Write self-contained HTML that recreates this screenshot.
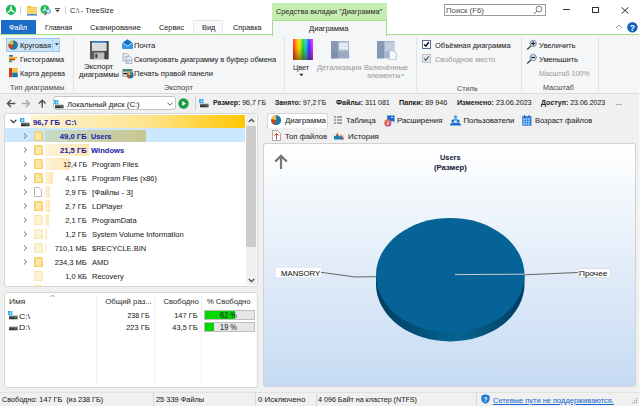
<!DOCTYPE html>
<html><head><meta charset="utf-8"><style>
html,body{margin:0;padding:0;width:640px;height:406px;overflow:hidden;background:#f0f0f0}
body{position:relative;font-family:"Liberation Sans",sans-serif;}
.t{position:absolute;white-space:pre;line-height:11px;-webkit-text-stroke:0.05px currentColor}

</style></head><body>
<div style="position:absolute;left:0px;top:0px;width:640px;height:20px;background:#fff"></div>
<div style="position:absolute;left:0px;top:20px;width:640px;height:14.5px;background:#fff"></div>
<div style="position:absolute;left:0px;top:35px;width:640px;height:58px;background:#f5f6f7"></div>
<div style="position:absolute;left:0px;top:93px;width:640px;height:1px;background:#dadbdc"></div>
<svg style="position:absolute;left:5px;top:4px;" width="12" height="12" viewBox="0 0 12 12"><circle cx="6" cy="5.8" r="5.1" fill="#1db954"/><path d="M6 2.4v3.4M6 5.8L3.1 8M6 5.8L8.9 8" stroke="#fff" stroke-width="1.5" fill="none" stroke-linecap="round"/></svg>
<div style="position:absolute;left:20px;top:6px;width:1px;height:7.5px;background:#cfcfcf"></div>
<svg style="position:absolute;left:26px;top:5px;" width="12" height="11" viewBox="0 0 12 11"><path d="M1 1h3.6l1 1.1H11V9H1z" fill="#f3b821"/><rect x="1" y="2.6" width="10" height="6.4" fill="#fbd66a"/><rect x="1" y="9" width="10" height="1.6" fill="#3d8fd6"/></svg>
<svg style="position:absolute;left:39px;top:4px;" width="14" height="13" viewBox="0 0 14 13"><circle cx="5.8" cy="5.4" r="4.4" fill="#1db954"/><path d="M5.8 2.6v2.8M5.8 5.4L3.6 7M5.8 5.4l2.2 1.6" stroke="#fff" stroke-width="1.1" fill="none"/><circle cx="9.4" cy="7.2" r="2.3" fill="#b9dcf6" stroke="#5b9ad6" stroke-width=".8"/><path d="M7.7 8.8L5.4 11.2" stroke="#555" stroke-width="1.1"/></svg>
<svg style="position:absolute;left:54px;top:7px;" width="7" height="6" viewBox="0 0 7 6"><path d="M1 1.7h5" stroke="#333" stroke-width="1"/><path d="M1.5 3h4L3.5 5z" fill="#222"/></svg>
<div style="position:absolute;left:65px;top:6px;width:1px;height:7.5px;background:#cfcfcf"></div>
<div class="t" style="left:70.17px;top:4.9px;transform-origin:0 0;transform:scaleX(0.9158);font-size:7.8px;color:#1e1e1e">C:\ - TreeSize</div>
<div style="position:absolute;left:272px;top:2.5px;width:115px;height:17.5px;background:#c6edb1"></div>
<div class="t" style="left:276.26px;top:6.4px;transform-origin:0 0;transform:scaleX(0.9329);font-size:7.8px;color:#2e2e2e">Средства вкладки "Диаграмма"</div>
<div style="position:absolute;left:443.5px;top:4px;width:102.3px;height:12.3px;background:#fff;border:1px solid #9c9c9c;box-sizing:border-box"></div>
<div class="t" style="left:446.44px;top:5.4px;transform-origin:0 0;transform:scaleX(0.9935);font-size:7.8px;color:#555">Поиск (F6)</div>
<svg style="position:absolute;left:533px;top:5px;" width="10" height="10" viewBox="0 0 10 10"><circle cx="6" cy="4" r="2.9" fill="none" stroke="#707070" stroke-width=".9"/><path d="M4 6L1 9" stroke="#707070" stroke-width="1"/></svg>
<div style="position:absolute;left:563px;top:9.3px;width:7px;height:1px;background:#333"></div>
<div style="position:absolute;left:592px;top:6.8px;width:6.5px;height:6.2px;border:1px solid #333;box-sizing:border-box"></div>
<svg style="position:absolute;left:620.5px;top:6.5px;" width="8" height="7" viewBox="0 0 8 7"><path d="M.5 .3l7 6.4M7.5 .3l-7 6.4" stroke="#222" stroke-width="1"/></svg>
<div style="position:absolute;left:1px;top:20px;width:35px;height:14.3px;background:#1a6cc6"></div>
<div class="t" style="left:9.31px;top:22.2px;transform-origin:0 0;transform:scaleX(0.9405);font-size:7.8px;color:#fff">Файл</div>
<div class="t" style="left:45.17px;top:22.2px;transform-origin:0 0;transform:scaleX(0.9182);font-size:7.8px;color:#1e1e1e">Главная</div>
<div class="t" style="left:90.35px;top:22.2px;transform-origin:0 0;transform:scaleX(0.9680);font-size:7.8px;color:#1e1e1e">Сканирование</div>
<div class="t" style="left:159.36px;top:22.2px;transform-origin:0 0;transform:scaleX(0.9392);font-size:7.8px;color:#1e1e1e">Сервис</div>
<div style="position:absolute;left:193.4px;top:20px;width:29.2px;height:14.5px;background:#fafafb;border:1px solid #e4e5e6;border-bottom:none;box-sizing:border-box"></div>
<div class="t" style="left:201.56px;top:22.2px;transform-origin:0 0;transform:scaleX(0.9489);font-size:7.8px;color:#1e1e1e">Вид</div>
<div class="t" style="left:232.76px;top:22.2px;transform-origin:0 0;transform:scaleX(0.9340);font-size:7.8px;color:#1e1e1e">Справка</div>
<div style="position:absolute;left:0px;top:34.2px;width:273px;height:1.3px;background:#a3df86"></div>
<div style="position:absolute;left:386px;top:34.2px;width:253px;height:1.3px;background:#a3df86"></div>
<div style="position:absolute;left:639px;top:20px;width:1px;height:386px;background:#f8f8f8"></div>
<div style="position:absolute;left:272px;top:20px;width:115px;height:15.5px;background:#f5f6f7;border:1.3px solid #a3df86;border-bottom:none;box-sizing:border-box"></div>
<div class="t" style="left:309.14px;top:22.5px;transform-origin:0 0;transform:scaleX(0.9745);font-size:7.8px;color:#1e1e1e">Диаграмма</div>
<svg style="position:absolute;left:614.5px;top:24px;" width="8" height="5" viewBox="0 0 8 5"><path d="M1 4l3-3 3 3" stroke="#9a9a9a" stroke-width="1" fill="none"/></svg>
<svg style="position:absolute;left:627px;top:21.5px;" width="11" height="11" viewBox="0 0 11 11"><circle cx="5.4" cy="5.3" r="5.2" fill="#1462c0"/><text x="5.4" y="8.6" text-anchor="middle" font-family="Liberation Sans" font-weight="bold" font-size="8.5" fill="#fff">?</text></svg>
<div style="position:absolute;left:73.4px;top:37px;width:1px;height:54px;background:#e2e3e4"></div>
<div style="position:absolute;left:284.4px;top:37px;width:1px;height:54px;background:#e2e3e4"></div>
<div style="position:absolute;left:416px;top:37px;width:1px;height:54px;background:#e2e3e4"></div>
<div style="position:absolute;left:520.5px;top:37px;width:1px;height:54px;background:#e2e3e4"></div>
<div style="position:absolute;left:597.6px;top:37px;width:1px;height:54px;background:#e2e3e4"></div>
<div style="position:absolute;left:6.3px;top:37.6px;width:53.5px;height:14px;background:#cce4f7;border:1px solid #98c8ee;box-sizing:border-box"></div>
<div style="position:absolute;left:52.3px;top:38.6px;width:1px;height:12px;background:#98c8ee"></div>
<svg style="position:absolute;left:8px;top:39.5px;" width="11" height="11" viewBox="0 0 11 11"><circle cx="5.2" cy="5.1" r="4.7" fill="#1e78a8"/><path d="M5.2 5.1L5.2 .4A4.7 4.7 0 0 0 .6 4.1z" fill="#f2c23e"/><path d="M5.2 5.1L.6 4.1A4.7 4.7 0 0 0 3.5 9.5z" fill="#cc4416"/></svg>
<div class="t" style="left:20.35px;top:40.1px;transform-origin:0 0;transform:scaleX(0.9625);font-size:7.8px;color:#1e1e1e">Круговая</div>
<svg style="position:absolute;left:54px;top:42px;" width="6" height="5" viewBox="0 0 6 5"><path d="M.8 1.2h4L2.8 3.6z" fill="#333"/></svg>
<svg style="position:absolute;left:9px;top:55px;" width="9" height="8" viewBox="0 0 9 8"><rect x="0" y="0" width="4" height="1.8" fill="#2a7ab8"/><rect x="0" y="1.8" width="8.5" height="1.8" fill="#f2b630"/><rect x="0" y="3.6" width="6" height="1.8" fill="#c84016"/><rect x="0" y="5.4" width="3" height="1.8" fill="#3a9a5a"/></svg>
<div class="t" style="left:20.36px;top:54.0px;transform-origin:0 0;transform:scaleX(0.9494);font-size:7.8px;color:#1e1e1e">Гистограмма</div>
<svg style="position:absolute;left:9px;top:68px;" width="9" height="9.5" viewBox="0 0 9 9.5"><rect x="0" y="0" width="3.2" height="9.2" fill="#c84016"/><rect x="3.2" y="0" width="5.6" height="4.6" fill="#f2c23e"/><rect x="3.2" y="4.6" width="5.6" height="4.6" fill="#1e78a8"/></svg>
<div class="t" style="left:20.37px;top:67.6px;transform-origin:0 0;transform:scaleX(0.9157);font-size:7.8px;color:#1e1e1e">Карта дерева</div>
<div class="t" style="left:10.15px;top:82.0px;transform-origin:0 0;transform:scaleX(0.9654);font-size:7.8px;color:#505050">Тип диаграммы</div>
<svg style="position:absolute;left:90.3px;top:40.6px;" width="19" height="19" viewBox="0 0 19 19"><rect x="0" y="0" width="18.5" height="18.2" fill="#5a5a5a"/><rect x="14.8" y="0" width="3.7" height="18.2" fill="#464646"/><rect x="2" y="0" width="14.5" height="1.8" fill="#2f7fd2"/><rect x="2" y="1.8" width="14.5" height="8" fill="#e8e8e8"/><path d="M2 3.6h14.5M2 5.4h14.5M2 7.2h14.5M2 9h14.5" stroke="#c9c9c9" stroke-width=".7"/><rect x="4.2" y="11.6" width="10" height="6.6" fill="#bdbdbd"/><rect x="5.4" y="12.8" width="1.8" height="4.2" fill="#3a3a3a"/></svg>
<div class="t" style="left:84.33px;top:61.2px;transform-origin:0 0;transform:scaleX(0.9943);font-size:7.8px;color:#1e1e1e">Экспорт</div>
<div class="t" style="left:79.25px;top:69.4px;transform-origin:0 0;transform:scaleX(0.9712);font-size:7.8px;color:#1e1e1e">диаграммы</div>
<svg style="position:absolute;left:122px;top:39.3px;" width="11" height="10" viewBox="0 0 11 10"><path d="M.4 3.8L5.5 .2l5.1 3.6V9.8H.4z" fill="#1670c8"/><path d="M.4 4.4L5.5 7.6l5.1-3.2V9.8H.4z" fill="#2a9ae8"/><path d="M.6 3.9L5.5 7.1l4.9-3.2" stroke="#fff" stroke-width=".8" fill="none"/></svg>
<div class="t" style="left:134.34px;top:39.8px;transform-origin:0 0;transform:scaleX(0.9845);font-size:7.8px;color:#1e1e1e">Почта</div>
<svg style="position:absolute;left:122px;top:53px;" width="11" height="11" viewBox="0 0 11 11"><path d="M1.2 .3h3.6l2 2v5.6H1.2z" fill="#f4f8fc" stroke="#8c8c8c" stroke-width=".7"/><rect x="2" y="2.5" width="2.5" height="3" fill="#cfe0f4"/><path d="M4.2 3.3h3.6l2 2v5.4H4.2z" fill="#eef4fb" stroke="#8c8c8c" stroke-width=".7"/><rect x="5.1" y="6" width="3.2" height="3.2" fill="#a9c9ee"/></svg>
<div class="t" style="left:134.25px;top:54.0px;transform-origin:0 0;transform:scaleX(0.9535);font-size:7.8px;color:#1e1e1e">Скопировать диаграмму в буфер обмена</div>
<svg style="position:absolute;left:122px;top:68.6px;" width="12" height="10" viewBox="0 0 12 10"><rect x=".6" y=".2" width="9.6" height="2.2" fill="#2f4f44"/><rect x="1.2" y=".6" width="8.4" height="1" fill="#3cb878"/><rect x=".3" y="2.3" width="10.2" height="5" rx=".6" fill="#dcdcdc" stroke="#5a5a5a" stroke-width=".5"/><rect x="1.4" y="3.9" width="5.5" height="1.3" fill="#111"/><circle cx="8.3" cy="6.3" r="3.3" fill="#1e78a8"/><path d="M8.3 6.3V3A3.3 3.3 0 0 0 5.2 5.2z" fill="#f2c23e"/><path d="M8.3 6.3L5.2 5.2A3.3 3.3 0 0 0 7.2 9.4z" fill="#cc4416"/></svg>
<div class="t" style="left:134.35px;top:68.0px;transform-origin:0 0;transform:scaleX(0.9697);font-size:7.8px;color:#1e1e1e">Печать правой панели</div>
<div class="t" style="left:164.04px;top:82.0px;transform-origin:0 0;transform:scaleX(0.9873);font-size:7.8px;color:#505050">Экспорт</div>
<div style="position:absolute;left:292.6px;top:39.2px;width:20.4px;height:20.6px;background:linear-gradient(90deg,#ff2020,#ffa000 18%,#e8e800 33%,#20d020 50%,#20d0d0 64%,#3030ff 80%,#ff20ff);"><div style="position:absolute;inset:0;background:linear-gradient(180deg,rgba(255,255,255,.15),rgba(128,128,128,0) 40%,rgba(80,40,40,.55))"></div></div>
<div class="t" style="left:293.27px;top:61.6px;transform-origin:0 0;transform:scaleX(0.9246);font-size:7.8px;color:#1e1e1e">Цвет</div>
<svg style="position:absolute;left:299px;top:72.5px;" width="5" height="4" viewBox="0 0 5 4"><path d="M.3 .8h4L2.3 3.2z" fill="#222"/></svg>
<svg style="position:absolute;left:330.7px;top:41px;" width="19" height="18" viewBox="0 0 19 18"><rect x="0" y="0" width="18.1" height="17.4" fill="#a3b3cc"/><rect x="0" y="0" width="7" height="17.4" fill="#8798b6"/><rect x="0" y="11" width="18.1" height="6.4" fill="#000" opacity=".06"/><rect x="7.8" y="1.2" width="9.4" height="8.2" fill="#c9d4e5"/><g fill="#f4f7fb"><rect x="8.8" y="2.4" width="2.1" height="2.6"/><rect x="11.6" y="2.4" width="2.1" height="2.6"/><rect x="14.4" y="2.4" width="2.1" height="2.6"/><rect x="8.8" y="5.6" width="2.1" height="2.6"/><rect x="11.6" y="5.6" width="2.1" height="2.6"/><rect x="14.4" y="5.6" width="2.1" height="2.6"/></g></svg>
<div class="t" style="left:317.16px;top:61.6px;transform-origin:0 0;transform:scaleX(0.9455);font-size:7.8px;color:#9c9c9c">Детализация</div>
<svg style="position:absolute;left:377px;top:41px;" width="20" height="19" viewBox="0 0 20 19"><rect x="0" y="0" width="17.5" height="17.4" fill="#a7b7cf"/><rect x="0" y="0" width="7" height="17.4" fill="#8798b6"/><rect x="7.8" y="1.2" width="9" height="9" fill="#c2cee2"/><path d="M12.3 9.6h4.2l2.8 2.8v6.3h-7z" fill="#f4f7fc" stroke="#9fb0ca" stroke-width=".7"/></svg>
<div class="t" style="left:364.35px;top:61.6px;transform-origin:0 0;transform:scaleX(0.9587);font-size:7.8px;color:#9c9c9c">Включённые</div>
<div class="t" style="left:366.56px;top:70.3px;transform-origin:0 0;transform:scaleX(0.9302);font-size:7.8px;color:#9c9c9c">элементы</div>
<svg style="position:absolute;left:401px;top:73.8px;" width="4" height="3" viewBox="0 0 4 3"><path d="M.2 .5h3.2L1.8 2.5z" fill="#aaa"/></svg>
<div style="position:absolute;left:422.2px;top:40.2px;width:8.5px;height:8.6px;background:#fff;border:1px solid #5b6f94;box-sizing:border-box"></div>
<svg style="position:absolute;left:423px;top:41px;" width="7" height="7" viewBox="0 0 7 7"><path d="M1.2 3.4l1.6 1.8L5.8 1.3" stroke="#000" stroke-width="1.4" fill="none"/></svg>
<div class="t" style="left:435.26px;top:39.6px;transform-origin:0 0;transform:scaleX(0.9473);font-size:7.8px;color:#1e1e1e">Объёмная диаграмма</div>
<div style="position:absolute;left:422.2px;top:54.4px;width:8.5px;height:8.8px;background:#e4e4e4;border:1px solid #c4c4c4;box-sizing:border-box"></div>
<svg style="position:absolute;left:423px;top:55.3px;" width="7" height="7" viewBox="0 0 7 7"><path d="M1.2 3.4l1.6 1.8L5.8 1.3" stroke="#3f5f8f" stroke-width="1.2" fill="none"/></svg>
<div class="t" style="left:435.26px;top:53.6px;transform-origin:0 0;transform:scaleX(0.9486);font-size:7.8px;color:#9c9c9c">Свободное место</div>
<div class="t" style="left:457.37px;top:82.5px;transform-origin:0 0;transform:scaleX(0.9277);font-size:7.8px;color:#505050">Стиль</div>
<svg style="position:absolute;left:526px;top:37.5px;" width="12" height="13" viewBox="0 0 12 13"><circle cx="7.2" cy="5.5" r="3.2" fill="#c9d9ea" stroke="#51739a" stroke-width=".7"/><path d="M5.3 5.5h3.8M7.2 3.6v3.8" stroke="#111" stroke-width="1.1"/><path d="M4.9 7.8L1.2 11.5" stroke="#333" stroke-width="1.2"/></svg>
<div class="t" style="left:538.55px;top:39.8px;transform-origin:0 0;transform:scaleX(0.9707);font-size:7.8px;color:#1e1e1e">Увеличить</div>
<svg style="position:absolute;left:526px;top:51.6px;" width="12" height="13" viewBox="0 0 12 13"><circle cx="7.2" cy="5.5" r="3.2" fill="#c9d9ea" stroke="#51739a" stroke-width=".7"/><path d="M5.3 5.5h3.8" stroke="#111" stroke-width="1.1"/><path d="M4.9 7.8L1.2 11.5" stroke="#333" stroke-width="1.2"/></svg>
<div class="t" style="left:538.55px;top:53.8px;transform-origin:0 0;transform:scaleX(0.9528);font-size:7.8px;color:#1e1e1e">Уменьшить</div>
<div class="t" style="left:538.57px;top:67.9px;transform-origin:0 0;transform:scaleX(0.9132);font-size:7.8px;color:#9c9c9c">Масштаб 100%</div>
<div class="t" style="left:542.87px;top:82.2px;transform-origin:0 0;transform:scaleX(0.9222);font-size:7.8px;color:#505050">Масштаб</div>
<svg style="position:absolute;left:6px;top:98.5px;" width="10" height="9" viewBox="0 0 10 9"><path d="M9.3 4.5H1.4M5 1L1.4 4.5 5 8" stroke="#505050" stroke-width="1.4" fill="none"/></svg>
<svg style="position:absolute;left:21px;top:98.5px;" width="10" height="9" viewBox="0 0 10 9"><path d="M.7 4.5h7.9M5 1l3.6 3.5L5 8" stroke="#a8a8a8" stroke-width="1.3" fill="none"/></svg>
<svg style="position:absolute;left:38px;top:99px;" width="9" height="9" viewBox="0 0 9 9"><path d="M4.2 8.8V1.2M.9 4.5l3.3-3.3L7.5 4.5" stroke="#505050" stroke-width="1.4" fill="none"/></svg>
<div style="position:absolute;left:52.5px;top:95.5px;width:123px;height:14.8px;background:#fff;border:1px solid #c4c4c4;border-radius:3px;box-sizing:border-box"></div>
<svg style="position:absolute;left:53.8px;top:99.5px;" width="10" height="9" viewBox="0 0 10 9"><defs><linearGradient id="dg" x1="0" x2="0" y1="0" y2="1"><stop offset="0" stop-color="#d0d0d0"/><stop offset=".35" stop-color="#5a5a5a"/><stop offset="1" stop-color="#1e1e1e"/></linearGradient></defs><rect x="1" y="4.3" width="8.6" height="4" rx=".9" fill="url(#dg)"/><rect x="6.6" y="6.6" width="1.8" height=".9" fill="#30d050"/><g fill="#2aa8f0"><rect x="0" y="0" width="2" height="1.9"/><rect x="2.4" y="0" width="2" height="1.9"/><rect x="0" y="2.3" width="2" height="1.9"/><rect x="2.4" y="2.3" width="2" height="1.9"/></g></svg>
<div class="t" style="left:67.44px;top:99.1px;transform-origin:0 0;transform:scaleX(0.9841);font-size:7.8px;color:#1e1e1e">Локальный диск (C:)</div>
<svg style="position:absolute;left:166.5px;top:101.5px;" width="6" height="4" viewBox="0 0 6 4"><path d="M.5 .7l2.5 2.5L5.5 .7" stroke="#555" stroke-width=".9" fill="none"/></svg>
<svg style="position:absolute;left:177.5px;top:97.8px;" width="11" height="11" viewBox="0 0 11 11"><circle cx="5.5" cy="5.5" r="5.2" fill="#1a9e46"/><path d="M4.3 3.1v4.8L7.9 5.5z" fill="#fff"/></svg>
<div style="position:absolute;left:195.3px;top:95.8px;width:1px;height:14.5px;background:#cfcfcf"></div>
<svg style="position:absolute;left:198.8px;top:99.3px;" width="10" height="9" viewBox="0 0 10 9"><defs><linearGradient id="dg" x1="0" x2="0" y1="0" y2="1"><stop offset="0" stop-color="#d0d0d0"/><stop offset=".35" stop-color="#5a5a5a"/><stop offset="1" stop-color="#1e1e1e"/></linearGradient></defs><rect x="1" y="4.3" width="8.6" height="4" rx=".9" fill="url(#dg)"/><rect x="6.6" y="6.6" width="1.8" height=".9" fill="#30d050"/><g fill="#2aa8f0"><rect x="0" y="0" width="2" height="1.9"/><rect x="2.4" y="0" width="2" height="1.9"/><rect x="0" y="2.3" width="2" height="1.9"/><rect x="2.4" y="2.3" width="2" height="1.9"/></g></svg>
<div class="t" style="left:213.18px;top:97.2px;transform-origin:0 0;transform:scaleX(0.8802);font-size:7.9px;color:#1e1e1e"><b>Размер:</b> 96,7 ГБ</div>
<div class="t" style="left:275.19px;top:97.2px;transform-origin:0 0;transform:scaleX(0.8680);font-size:7.9px;color:#1e1e1e"><b>Занято:</b> 97,2 ГБ</div>
<div class="t" style="left:335.68px;top:97.2px;transform-origin:0 0;transform:scaleX(0.8883);font-size:7.9px;color:#1e1e1e"><b>Файлы:</b> 311 081</div>
<div class="t" style="left:398.86px;top:97.2px;transform-origin:0 0;transform:scaleX(0.9188);font-size:7.9px;color:#1e1e1e"><b>Папки:</b> 89 946</div>
<div class="t" style="left:457.17px;top:97.2px;transform-origin:0 0;transform:scaleX(0.9016);font-size:7.9px;color:#1e1e1e"><b>Изменено:</b> 23.06.2023</div>
<div class="t" style="left:541.18px;top:97.2px;transform-origin:0 0;transform:scaleX(0.8878);font-size:7.9px;color:#1e1e1e"><b>Доступ:</b> 23.06.2023</div>
<div class="t" style="left:615.53px;top:97.2px;transform-origin:0 0;font-size:7.8px;color:#1e1e1e">...</div>
<div style="position:absolute;left:4px;top:113px;width:253.5px;height:173.5px;background:#fff;border:1px solid #d6d6d6;border-radius:3px;box-sizing:border-box"></div>
<div style="position:absolute;left:246px;top:114.2px;width:10.3px;height:171.3px;background:#f0f0f0"></div>
<div style="position:absolute;left:246px;top:126px;width:10.3px;height:120.6px;background:#cdcdcd"></div>
<svg style="position:absolute;left:247.5px;top:117.5px;" width="7" height="5" viewBox="0 0 7 5"><path d="M.8 4l2.7-2.7L6.2 4" stroke="#444" stroke-width="1.2" fill="none"/></svg>
<svg style="position:absolute;left:247.5px;top:277.5px;" width="7" height="5" viewBox="0 0 7 5"><path d="M.8 1l2.7 2.7L6.2 1" stroke="#444" stroke-width="1.2" fill="none"/></svg>
<div style="position:absolute;left:30.8px;top:115.2px;width:214.2px;height:12.7px;background:linear-gradient(90deg,#fff4d4 0%,#ffe38e 55%,#ffc700 100%)"></div>
<svg style="position:absolute;left:9.5px;top:119.3px;" width="7" height="4.5" viewBox="0 0 7 4.5"><path d="M.6 .8l2.9 2.8L6.4 .8" stroke="#333" stroke-width="1.2" fill="none"/></svg>
<svg style="position:absolute;left:20px;top:117.5px;" width="10" height="9" viewBox="0 0 10 9"><defs><linearGradient id="dg" x1="0" x2="0" y1="0" y2="1"><stop offset="0" stop-color="#d0d0d0"/><stop offset=".35" stop-color="#5a5a5a"/><stop offset="1" stop-color="#1e1e1e"/></linearGradient></defs><rect x="1" y="4.3" width="8.6" height="4" rx=".9" fill="url(#dg)"/><rect x="6.6" y="6.6" width="1.8" height=".9" fill="#30d050"/><g fill="#2aa8f0"><rect x="0" y="0" width="2" height="1.9"/><rect x="2.4" y="0" width="2" height="1.9"/><rect x="0" y="2.3" width="2" height="1.9"/><rect x="2.4" y="2.3" width="2" height="1.9"/></g></svg>
<div class="t" style="left:33.29px;top:116.7px;transform-origin:0 0;transform:scaleX(0.9929);font-size:7.8px;color:#1c1ca8;font-weight:bold">96,7 ГБ</div>
<div class="t" style="left:65.09px;top:116.7px;transform-origin:0 0;transform:scaleX(1.0982);font-size:7.8px;color:#1c1ca8;font-weight:bold">C:\</div>
<div style="position:absolute;left:5px;top:128.4px;width:240px;height:13.9px;background:#cce8ff"></div>
<div style="position:absolute;left:45.3px;top:129.6px;width:100.39999999999999px;height:12.6px;background:linear-gradient(90deg,#c7dcc8,#c9c590)"></div>
<svg style="position:absolute;left:23px;top:132.9px;" width="5" height="6" viewBox="0 0 5 6"><path d="M1 .6l2.5 2.4L1 5.4" stroke="#666" stroke-width="1" fill="none"/></svg>
<svg style="position:absolute;left:33.6px;top:130.9px;" width="10" height="10" viewBox="0 0 10 10"><g opacity="1"><rect x=".7" y=".7" width="7.4" height="9.1" fill="#f9dc80" stroke="#efc344" stroke-width=".9"/><rect x="1.6" y="1.6" width="5.6" height="7.3" fill="#fce7a6"/><path d="M8.1 5.5l.8 1v2.5h-.8z" fill="#efc344"/></g></svg>
<div class="t" style="right:552.94px;top:131.2px;transform-origin:100% 0;transform:scaleX(0.9718);font-size:7.9px;color:#1c1ca8;font-weight:bold">49,0 ГБ</div>
<div class="t" style="left:91.16px;top:131.2px;transform-origin:0 0;transform:scaleX(0.9290);font-size:7.9px;color:#1c1ca8;font-weight:bold">Users</div>
<div style="position:absolute;left:45.3px;top:143.6px;width:43.900000000000006px;height:12.6px;background:linear-gradient(90deg,#fef4dc,#fde7b2)"></div>
<svg style="position:absolute;left:23px;top:146.9px;" width="5" height="6" viewBox="0 0 5 6"><path d="M1 .6l2.5 2.4L1 5.4" stroke="#666" stroke-width="1" fill="none"/></svg>
<svg style="position:absolute;left:33.6px;top:144.9px;" width="10" height="10" viewBox="0 0 10 10"><g opacity="1"><rect x=".7" y=".7" width="7.4" height="9.1" fill="#f9dc80" stroke="#efc344" stroke-width=".9"/><rect x="1.6" y="1.6" width="5.6" height="7.3" fill="#fce7a6"/><path d="M8.1 5.5l.8 1v2.5h-.8z" fill="#efc344"/></g></svg>
<div class="t" style="right:552.94px;top:145.2px;transform-origin:100% 0;transform:scaleX(0.9643);font-size:7.9px;color:#1c1ca8;font-weight:bold">21,5 ГБ</div>
<div class="t" style="left:91.14px;top:145.2px;transform-origin:0 0;transform:scaleX(0.9609);font-size:7.9px;color:#1c1ca8;font-weight:bold">Windows</div>
<div style="position:absolute;left:45.3px;top:157.6px;width:24.60000000000001px;height:12.6px;background:linear-gradient(90deg,#fef4dc,#fde7b2)"></div>
<svg style="position:absolute;left:23px;top:160.9px;" width="5" height="6" viewBox="0 0 5 6"><path d="M1 .6l2.5 2.4L1 5.4" stroke="#666" stroke-width="1" fill="none"/></svg>
<svg style="position:absolute;left:33.6px;top:158.9px;" width="10" height="10" viewBox="0 0 10 10"><g opacity="1"><rect x=".7" y=".7" width="7.4" height="9.1" fill="#f9dc80" stroke="#efc344" stroke-width=".9"/><rect x="1.6" y="1.6" width="5.6" height="7.3" fill="#fce7a6"/><path d="M8.1 5.5l.8 1v2.5h-.8z" fill="#efc344"/></g></svg>
<div class="t" style="right:552.98px;top:159.2px;transform-origin:100% 0;transform:scaleX(0.8785);font-size:7.9px;color:#1e1e1e">12,4 ГБ</div>
<div class="t" style="left:92.05px;top:159.2px;transform-origin:0 0;transform:scaleX(0.9406);font-size:7.9px;color:#1e1e1e">Program Files</div>
<div style="position:absolute;left:45.3px;top:171.6px;width:7.5px;height:12.6px;background:linear-gradient(90deg,#fef4dc,#fde7b2)"></div>
<svg style="position:absolute;left:23px;top:174.9px;" width="5" height="6" viewBox="0 0 5 6"><path d="M1 .6l2.5 2.4L1 5.4" stroke="#666" stroke-width="1" fill="none"/></svg>
<svg style="position:absolute;left:33.6px;top:172.9px;" width="10" height="10" viewBox="0 0 10 10"><g opacity="1"><rect x=".7" y=".7" width="7.4" height="9.1" fill="#f9dc80" stroke="#efc344" stroke-width=".9"/><rect x="1.6" y="1.6" width="5.6" height="7.3" fill="#fce7a6"/><path d="M8.1 5.5l.8 1v2.5h-.8z" fill="#efc344"/></g></svg>
<div class="t" style="right:552.95px;top:173.2px;transform-origin:100% 0;transform:scaleX(0.9500);font-size:7.9px;color:#1e1e1e">4,1 ГБ</div>
<div class="t" style="left:92.06px;top:173.2px;transform-origin:0 0;transform:scaleX(0.9366);font-size:7.9px;color:#1e1e1e">Program Files (x86)</div>
<div style="position:absolute;left:45.3px;top:185.6px;width:5.200000000000003px;height:12.6px;background:linear-gradient(90deg,#fef4dc,#fde7b2)"></div>
<svg style="position:absolute;left:23px;top:188.9px;" width="5" height="6" viewBox="0 0 5 6"><path d="M1 .6l2.5 2.4L1 5.4" stroke="#666" stroke-width="1" fill="none"/></svg>
<svg style="position:absolute;left:34.2px;top:186.9px;" width="8" height="10" viewBox="0 0 8 10"><path d="M.5 .5h4.5l2.5 2.5v6.5H.5z" fill="#fff" stroke="#999" stroke-width=".7"/></svg>
<div class="t" style="right:552.95px;top:187.2px;transform-origin:100% 0;transform:scaleX(0.9500);font-size:7.9px;color:#1e1e1e">2,9 ГБ</div>
<div class="t" style="left:92.03px;top:187.2px;transform-origin:0 0;font-size:7.9px;color:#1e1e1e">[Файлы - 3]</div>
<div style="position:absolute;left:45.3px;top:199.6px;width:5.200000000000003px;height:12.6px;background:linear-gradient(90deg,#fef4dc,#fde7b2)"></div>
<svg style="position:absolute;left:23px;top:202.9px;" width="5" height="6" viewBox="0 0 5 6"><path d="M1 .6l2.5 2.4L1 5.4" stroke="#666" stroke-width="1" fill="none"/></svg>
<svg style="position:absolute;left:33.6px;top:200.9px;" width="10" height="10" viewBox="0 0 10 10"><g opacity="1"><rect x=".7" y=".7" width="7.4" height="9.1" fill="#f9dc80" stroke="#efc344" stroke-width=".9"/><rect x="1.6" y="1.6" width="5.6" height="7.3" fill="#fce7a6"/><path d="M8.1 5.5l.8 1v2.5h-.8z" fill="#efc344"/></g></svg>
<div class="t" style="right:552.95px;top:201.2px;transform-origin:100% 0;transform:scaleX(0.9500);font-size:7.9px;color:#1e1e1e">2,7 ГБ</div>
<div class="t" style="left:92.05px;top:201.2px;transform-origin:0 0;transform:scaleX(0.9500);font-size:7.9px;color:#1e1e1e">LDPlayer</div>
<div style="position:absolute;left:45.3px;top:213.6px;width:3.3000000000000043px;height:12.6px;background:linear-gradient(90deg,#fef4dc,#fde7b2)"></div>
<svg style="position:absolute;left:23px;top:216.9px;" width="5" height="6" viewBox="0 0 5 6"><path d="M1 .6l2.5 2.4L1 5.4" stroke="#666" stroke-width="1" fill="none"/></svg>
<svg style="position:absolute;left:33.6px;top:214.9px;" width="10" height="10" viewBox="0 0 10 10"><g opacity=".45"><rect x=".7" y=".7" width="7.4" height="9.1" fill="#f9dc80" stroke="#efc344" stroke-width=".9"/><rect x="1.6" y="1.6" width="5.6" height="7.3" fill="#fce7a6"/><path d="M8.1 5.5l.8 1v2.5h-.8z" fill="#efc344"/></g></svg>
<div class="t" style="right:552.95px;top:215.2px;transform-origin:100% 0;transform:scaleX(0.9500);font-size:7.9px;color:#1e1e1e">2,1 ГБ</div>
<div class="t" style="left:92.05px;top:215.2px;transform-origin:0 0;transform:scaleX(0.9500);font-size:7.9px;color:#1e1e1e">ProgramData</div>
<div style="position:absolute;left:45.3px;top:227.6px;width:1.7000000000000028px;height:12.6px;background:linear-gradient(90deg,#fef4dc,#fde7b2)"></div>
<svg style="position:absolute;left:23px;top:230.9px;" width="5" height="6" viewBox="0 0 5 6"><path d="M1 .6l2.5 2.4L1 5.4" stroke="#666" stroke-width="1" fill="none"/></svg>
<svg style="position:absolute;left:33.6px;top:228.9px;" width="10" height="10" viewBox="0 0 10 10"><g opacity=".45"><rect x=".7" y=".7" width="7.4" height="9.1" fill="#f9dc80" stroke="#efc344" stroke-width=".9"/><rect x="1.6" y="1.6" width="5.6" height="7.3" fill="#fce7a6"/><path d="M8.1 5.5l.8 1v2.5h-.8z" fill="#efc344"/></g></svg>
<div class="t" style="right:552.95px;top:229.2px;transform-origin:100% 0;transform:scaleX(0.9500);font-size:7.9px;color:#1e1e1e">1,2 ГБ</div>
<div class="t" style="left:92.05px;top:229.2px;transform-origin:0 0;transform:scaleX(0.9500);font-size:7.9px;color:#1e1e1e">System Volume Information</div>
<div style="position:absolute;left:45.3px;top:241.6px;width:1.2000000000000028px;height:12.6px;background:linear-gradient(90deg,#fef4dc,#fde7b2)"></div>
<svg style="position:absolute;left:23px;top:244.9px;" width="5" height="6" viewBox="0 0 5 6"><path d="M1 .6l2.5 2.4L1 5.4" stroke="#666" stroke-width="1" fill="none"/></svg>
<svg style="position:absolute;left:33.6px;top:242.9px;" width="10" height="10" viewBox="0 0 10 10"><g opacity=".45"><rect x=".7" y=".7" width="7.4" height="9.1" fill="#f9dc80" stroke="#efc344" stroke-width=".9"/><rect x="1.6" y="1.6" width="5.6" height="7.3" fill="#fce7a6"/><path d="M8.1 5.5l.8 1v2.5h-.8z" fill="#efc344"/></g></svg>
<div class="t" style="right:552.95px;top:243.2px;transform-origin:100% 0;transform:scaleX(0.9500);font-size:7.9px;color:#1e1e1e">710,1 МБ</div>
<div class="t" style="left:92.05px;top:243.2px;transform-origin:0 0;transform:scaleX(0.9500);font-size:7.9px;color:#1e1e1e">$RECYCLE.BIN</div>
<div style="position:absolute;left:45.3px;top:255.60000000000002px;width:0.20000000000000284px;height:12.6px;background:linear-gradient(90deg,#fef4dc,#fde7b2)"></div>
<svg style="position:absolute;left:23px;top:258.90000000000003px;" width="5" height="6" viewBox="0 0 5 6"><path d="M1 .6l2.5 2.4L1 5.4" stroke="#666" stroke-width="1" fill="none"/></svg>
<svg style="position:absolute;left:33.6px;top:256.90000000000003px;" width="10" height="10" viewBox="0 0 10 10"><g opacity="1"><rect x=".7" y=".7" width="7.4" height="9.1" fill="#f9dc80" stroke="#efc344" stroke-width=".9"/><rect x="1.6" y="1.6" width="5.6" height="7.3" fill="#fce7a6"/><path d="M8.1 5.5l.8 1v2.5h-.8z" fill="#efc344"/></g></svg>
<div class="t" style="right:552.95px;top:257.2px;transform-origin:100% 0;transform:scaleX(0.9500);font-size:7.9px;color:#1e1e1e">234,3 МБ</div>
<div class="t" style="left:92.05px;top:257.2px;transform-origin:0 0;transform:scaleX(0.9500);font-size:7.9px;color:#1e1e1e">AMD</div>
<div style="position:absolute;left:45.3px;top:269.6px;width:-0.29999999999999716px;height:12.6px;background:linear-gradient(90deg,#fef4dc,#fde7b2)"></div>
<svg style="position:absolute;left:33.6px;top:270.90000000000003px;" width="10" height="10" viewBox="0 0 10 10"><g opacity=".45"><rect x=".7" y=".7" width="7.4" height="9.1" fill="#f9dc80" stroke="#efc344" stroke-width=".9"/><rect x="1.6" y="1.6" width="5.6" height="7.3" fill="#fce7a6"/><path d="M8.1 5.5l.8 1v2.5h-.8z" fill="#efc344"/></g></svg>
<div class="t" style="right:552.95px;top:271.2px;transform-origin:100% 0;transform:scaleX(0.9500);font-size:7.9px;color:#1e1e1e">1,0 КБ</div>
<div class="t" style="left:92.05px;top:271.2px;transform-origin:0 0;transform:scaleX(0.9500);font-size:7.9px;color:#1e1e1e">Recovery</div>
<div style="position:absolute;left:45.3px;top:283.6px;width:0.7000000000000028px;height:2.0px;background:linear-gradient(90deg,#fef4dc,#fde7b2)"></div>
<div style="position:absolute;left:33.9px;top:284.2px;width:7.6px;height:1.6px;background:#fbe7ae;opacity:.6"></div>
<div style="position:absolute;left:4px;top:292px;width:253.5px;height:95.5px;background:#fff;border:1px solid #d6d6d6;border-radius:3px;box-sizing:border-box"></div>
<svg style="position:absolute;left:49.5px;top:293.8px;" width="5" height="3.5" viewBox="0 0 5 3.5"><path d="M.5 3L2.5 1 4.5 3" stroke="#888" stroke-width=".8" fill="none"/></svg>
<div class="t" style="left:9.30px;top:296.1px;transform-origin:0 0;transform:scaleX(1.0736);font-size:7.8px;color:#333">Имя</div>
<div style="position:absolute;left:96.1px;top:294px;width:1px;height:92px;background:#eff1f3"></div>
<div style="position:absolute;left:154px;top:294px;width:1px;height:92px;background:#eff1f3"></div>
<div style="position:absolute;left:201.2px;top:294px;width:1px;height:92px;background:#eff1f3"></div>
<div class="t" style="right:488.23px;top:296.0px;transform-origin:100% 0;font-size:7.8px;color:#333">Общий раз...</div>
<div class="t" style="right:441.54px;top:296.0px;transform-origin:100% 0;transform:scaleX(0.9883);font-size:7.8px;color:#333">Свободно</div>
<div class="t" style="left:207.45px;top:296.0px;transform-origin:0 0;transform:scaleX(0.9655);font-size:7.8px;color:#333">% Свободно</div>
<svg style="position:absolute;left:8.3px;top:310.8px;" width="10" height="9" viewBox="0 0 10 9"><defs><linearGradient id="dg" x1="0" x2="0" y1="0" y2="1"><stop offset="0" stop-color="#d0d0d0"/><stop offset=".35" stop-color="#5a5a5a"/><stop offset="1" stop-color="#1e1e1e"/></linearGradient></defs><rect x="1" y="4.3" width="8.6" height="4" rx=".9" fill="url(#dg)"/><rect x="6.6" y="6.6" width="1.8" height=".9" fill="#30d050"/><g fill="#2aa8f0"><rect x="0" y="0" width="2" height="1.9"/><rect x="2.4" y="0" width="2" height="1.9"/><rect x="0" y="2.3" width="2" height="1.9"/><rect x="2.4" y="2.3" width="2" height="1.9"/></g></svg>
<div class="t" style="left:19.48px;top:310.6px;transform-origin:0 0;transform:scaleX(1.1071);font-size:7.8px;color:#1e1e1e">C:\</div>
<svg style="position:absolute;left:8.3px;top:322.3px;" width="10" height="9" viewBox="0 0 10 9"><defs><linearGradient id="dg" x1="0" x2="0" y1="0" y2="1"><stop offset="0" stop-color="#d0d0d0"/><stop offset=".35" stop-color="#5a5a5a"/><stop offset="1" stop-color="#1e1e1e"/></linearGradient></defs><rect x="1" y="4.3" width="8.6" height="4" rx=".9" fill="url(#dg)"/><rect x="6.6" y="6.6" width="1.8" height=".9" fill="#30d050"/></svg>
<div class="t" style="left:19.48px;top:322.4px;transform-origin:0 0;transform:scaleX(1.1071);font-size:7.8px;color:#1e1e1e">D:\</div>
<div class="t" style="right:490.18px;top:310.0px;transform-origin:100% 0;transform:scaleX(0.8991);font-size:7.8px;color:#1e1e1e">238 ГБ</div>
<div class="t" style="right:442.26px;top:310.0px;transform-origin:100% 0;transform:scaleX(0.9487);font-size:7.8px;color:#1e1e1e">147 ГБ</div>
<div class="t" style="right:490.16px;top:322.4px;transform-origin:100% 0;transform:scaleX(0.9487);font-size:7.8px;color:#1e1e1e">223 ГБ</div>
<div class="t" style="right:442.26px;top:322.4px;transform-origin:100% 0;transform:scaleX(0.9487);font-size:7.8px;color:#1e1e1e">43,5 ГБ</div>
<div style="position:absolute;left:203.6px;top:310.2px;width:51.2px;height:9.6px;background:#e6e6e6;border:1px solid #bdbdbd;box-sizing:border-box"></div>
<div style="position:absolute;left:204.6px;top:311.2px;width:30.80000000000001px;height:7.6px;background:#00d800"></div>
<div class="t" style="left:219.09px;top:309.9px;transform-origin:50% 0;transform:scaleX(0.8870);font-size:8.3px;color:#1e1e1e">62 %</div>
<div style="position:absolute;left:203.6px;top:322.3px;width:51.2px;height:9.4px;background:#e6e6e6;border:1px solid #bdbdbd;box-sizing:border-box"></div>
<div style="position:absolute;left:204.6px;top:323.3px;width:9.400000000000006px;height:7.4px;background:#00d800"></div>
<div class="t" style="left:219.09px;top:321.9px;transform-origin:50% 0;transform:scaleX(0.8870);font-size:8.3px;color:#1e1e1e">19 %</div>
<div style="position:absolute;left:267.3px;top:113px;width:61px;height:14.8px;background:#fff;border:1px solid #d6d6d6;border-bottom:none;border-radius:3px 3px 0 0;box-sizing:border-box"></div>
<svg style="position:absolute;left:270.5px;top:115.2px;" width="11" height="11" viewBox="0 0 11 11"><circle cx="5.2" cy="5.2" r="4.9" fill="#1e78a8"/><path d="M5.2 5.2L5.2 .3A4.9 4.9 0 0 0 .4 4.2z" fill="#f2c23e"/><path d="M5.2 5.2L.4 4.2A4.9 4.9 0 0 0 3.5 9.8z" fill="#cc4416"/></svg>
<div class="t" style="left:284.53px;top:115.3px;transform-origin:0 0;transform:scaleX(1.0098);font-size:7.8px;color:#1e1e1e">Диаграмма</div>
<svg style="position:absolute;left:334px;top:116px;" width="8" height="9" viewBox="0 0 8 9"><path d="M0 1h2M0 4h2M0 7h2M3 1h5M3 4h5M3 7h5" stroke="#444" stroke-width=".9"/></svg>
<div class="t" style="left:346.45px;top:115.3px;transform-origin:0 0;transform:scaleX(0.9682);font-size:7.8px;color:#1e1e1e">Таблица</div>
<svg style="position:absolute;left:382.5px;top:114.5px;" width="12" height="12" viewBox="0 0 12 12"><defs><linearGradient id="eg" x1="0" y1="0" x2="1" y2="1"><stop offset="0" stop-color="#f07a30"/><stop offset="1" stop-color="#b84aa8"/></linearGradient></defs><path d="M4.2 .6h7.3v6.9L10.2 6.3H4.2z" fill="#1468d0"/><path d="M8 2.4h2" stroke="#fff" stroke-width=".9"/><circle cx="4.8" cy="7.9" r="3.6" fill="url(#eg)"/><path d="M5.3 5.8v3.2" stroke="#fff" stroke-width=".7"/><circle cx="4.6" cy="9.1" r=".8" fill="#fff"/></svg>
<div class="t" style="left:397.03px;top:115.3px;transform-origin:0 0;font-size:7.8px;color:#1e1e1e">Расширения</div>
<svg style="position:absolute;left:449.8px;top:114.6px;" width="11" height="11" viewBox="0 0 11 11"><circle cx="5.5" cy="1.9" r="1.7" fill="#3aa2ea"/><path d="M3.1 5.6a2.4 2.1 0 0 1 4.8 0z" fill="#3aa2ea"/><circle cx="2.9" cy="6" r="1.5" fill="#1d6fca"/><circle cx="8.1" cy="6" r="1.5" fill="#1d6fca"/><path d="M0 10.6Q0 7.8 2.6 7.8H8.4Q11 7.8 11 10.6z" fill="#1d6fca"/></svg>
<div class="t" style="left:463.53px;top:115.3px;transform-origin:0 0;font-size:7.8px;color:#1e1e1e">Пользователи</div>
<svg style="position:absolute;left:521.9px;top:114.6px;" width="10" height="11" viewBox="0 0 10 11"><rect x=".2" y="1.2" width="9.3" height="9.5" fill="#2a7fd8"/><g fill="#b4dafc"><rect x="1.1" y="3.4" width="1.7" height="1.5"/><rect x="3.6" y="3.4" width="1.7" height="1.5"/><rect x="6.1" y="3.4" width="1.7" height="1.5"/><rect x="1.1" y="5.7" width="1.7" height="1.5"/><rect x="3.6" y="5.7" width="1.7" height="1.5"/><rect x="6.1" y="5.7" width="1.7" height="1.5"/><rect x="1.1" y="8.0" width="1.7" height="1.5"/><rect x="3.6" y="8.0" width="1.7" height="1.5"/><rect x="6.1" y="8.0" width="1.7" height="1.5"/></g><rect x="2" y=".2" width="1.2" height="2" fill="#1255a8"/><rect x="6.5" y=".2" width="1.2" height="2" fill="#1255a8"/></svg>
<div class="t" style="left:534.85px;top:115.3px;transform-origin:0 0;transform:scaleX(0.9603);font-size:7.8px;color:#1e1e1e">Возраст файлов</div>
<svg style="position:absolute;left:272px;top:130px;" width="9" height="11" viewBox="0 0 9 11"><path d="M.5 .5h5l3 3v7H.5z" fill="#fff" stroke="#888" stroke-width=".7"/><path d="M4.5 9.5V3.5M2.3 5.6l2.2-2.2 2.2 2.2" stroke="#d83a1a" stroke-width="1" fill="none"/></svg>
<div class="t" style="left:284.54px;top:131.4px;transform-origin:0 0;transform:scaleX(0.9781);font-size:7.8px;color:#1e1e1e">Топ файлов</div>
<svg style="position:absolute;left:334.2px;top:132.3px;" width="10" height="8" viewBox="0 0 10 8"><path d="M1.4 5L3.2 .4 4.8 3.6z" fill="#d8401a"/><path d="M5.4 4.2L6.9 1.6 8.1 3.8z" fill="#f2c030"/><path d="M7.2 7.6L8.7 2.8 9.8 7.6z" fill="#d8401a"/><path d="M0 7.6V3.4L1.9 4.2 3.4 2.4 5.6 4.6 7 3.4 8.4 5.8V7.6z" fill="#1a80b4"/></svg>
<div class="t" style="left:347.52px;top:131.4px;transform-origin:0 0;transform:scaleX(1.0234);font-size:7.8px;color:#1e1e1e">История</div>
<div style="position:absolute;left:263.3px;top:143.2px;width:373px;height:243.8px;box-sizing:border-box;border:1px solid #d2d2d2;border-radius:3px;background:linear-gradient(180deg,#ffffff 0%,#c6dbf3 100%)"></div>
<svg style="position:absolute;left:273.6px;top:153.6px;" width="14" height="15.5" viewBox="0 0 14 15.5"><path d="M7 15.5V1.8M1.2 7.6l5.8-5.8 5.8 5.8" stroke="#767676" stroke-width="2.2" fill="none"/></svg>
<div class="t" style="left:440.16px;top:152.4px;transform-origin:0 0;transform:scaleX(0.9729);font-size:7.6px;color:#1a1a3a;font-weight:bold">Users</div>
<div class="t" style="left:433.64px;top:161.9px;transform-origin:0 0;transform:scaleX(1.0129);font-size:7.6px;color:#1a1a3a;font-weight:bold">(Размер)</div>
<svg style="position:absolute;left:260px;top:200px;" width="380" height="160" viewBox="0 0 380 160"><defs><linearGradient id="sd" x1="0" x2="1" y1="0" y2="0"><stop offset="0" stop-color="#023f60"/><stop offset=".35" stop-color="#035580"/><stop offset=".55" stop-color="#056490"/><stop offset="1" stop-color="#023f60"/></linearGradient></defs><path d="M116 75.2 L116 84.2 A74.25 57.2 0 0 0 264.5 84.2 L264.5 75.2z" fill="url(#sd)"/><ellipse cx="190.25" cy="75.2" rx="74.25" ry="57.2" fill="#066398"/><path d="M195 74.6 L264 74.2" stroke="#c8c8c8" stroke-width="1"/><path d="M61 72.3 L95 77 L116 76.7" stroke="#555" stroke-width=".9" fill="none"/><path d="M264.5 74.8 L317.7 72.5" stroke="#555" stroke-width=".9" fill="none"/></svg>
<div style="position:absolute;left:275.75px;top:268px;width:45px;height:9.3px;background:#fff"></div>
<div class="t" style="left:280.73px;top:267.8px;transform-origin:0 0;transform:scaleX(1.0129);font-size:7.7px;color:#111">MANSORY</div>
<div style="position:absolute;left:577.7px;top:267.5px;width:33px;height:10.5px;background:#fff;border:1px solid #ddd;box-sizing:border-box"></div>
<div class="t" style="left:579.41px;top:267.9px;transform-origin:0 0;transform:scaleX(1.0687);font-size:7.7px;color:#111">Прочее</div>
<div style="position:absolute;left:0px;top:391.5px;width:640px;height:1px;background:#e2e2e2"></div>
<div class="t" style="left:1.96px;top:394.4px;transform-origin:0 0;transform:scaleX(0.9296);font-size:7.8px;color:#1e1e1e">Свободно: 147 ГБ&nbsp; (из 238 ГБ)</div>
<div style="position:absolute;left:153px;top:393px;width:1px;height:13px;background:#d8d8d8"></div>
<div style="position:absolute;left:255.2px;top:393px;width:1px;height:13px;background:#d8d8d8"></div>
<div style="position:absolute;left:316px;top:393px;width:1px;height:13px;background:#d8d8d8"></div>
<div style="position:absolute;left:476.3px;top:393px;width:1px;height:13px;background:#d8d8d8"></div>
<div class="t" style="left:155.86px;top:394.4px;transform-origin:0 0;transform:scaleX(0.9487);font-size:7.8px;color:#1e1e1e">25 339 Файлы</div>
<div class="t" style="left:258.13px;top:394.4px;transform-origin:0 0;transform:scaleX(1.0121);font-size:7.8px;color:#1e1e1e">0 Исключено</div>
<div class="t" style="left:317.67px;top:394.4px;transform-origin:0 0;transform:scaleX(0.9151);font-size:7.8px;color:#1e1e1e">4 096 Байт на кластер (NTFS)</div>
<svg style="position:absolute;left:481px;top:394px;" width="9" height="10" viewBox="0 0 9 10"><path d="M4.5 .3L8.6 1.8V5c0 2.4-1.8 4-4.1 4.8C2.2 9 .4 7.4.4 5V1.8z" fill="#1e78d0"/><text x="4.5" y="7.6" text-anchor="middle" font-family="Liberation Sans" font-weight="bold" font-size="6.5" fill="#fff">?</text></svg>
<div class="t" style="left:493.30px;top:394.7px;transform-origin:0 0;transform:scaleX(0.9566);font-size:7.8px;color:#1a6ad0;text-decoration:underline">Сетевые пути не поддерживаются.</div>
<svg style="position:absolute;left:631px;top:397px;" width="8" height="8" viewBox="0 0 8 8"><g fill="#b0b0b0"><rect x="5" y="1" width="1.3" height="1.3"/><rect x="3" y="3" width="1.3" height="1.3"/><rect x="5" y="3" width="1.3" height="1.3"/><rect x="1" y="5" width="1.3" height="1.3"/><rect x="3" y="5" width="1.3" height="1.3"/><rect x="5" y="5" width="1.3" height="1.3"/></g></svg>
</body></html>
